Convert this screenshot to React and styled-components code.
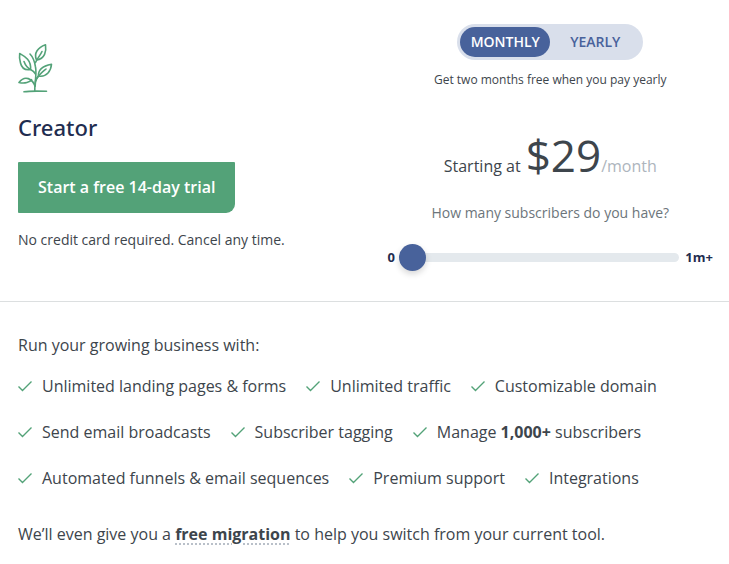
import React, { Component } from 'react';
import styled, { createGlobalStyle } from 'styled-components';

const GlobalStyle = createGlobalStyle`
  * {
    box-sizing: border-box;
  }

  body {
    margin: 0;
    background: #fff;
    color: #3d454c;
    font-family: "Open Sans", "Noto Sans", sans-serif;
    font-size: 16px;
    line-height: 24px;
  }
`;

const TopWrapper = styled.section`
  display: grid;
  grid-template-columns: 1fr 1fr;
  column-gap: 44px;
  padding: 24px 16px 30px 18px;
  border-bottom: 1px solid #dcdfe0;
`;

const PlanWrapper = styled.div`
  display: flex;
  flex-direction: column;
  align-items: flex-start;
  padding-top: 19px;
`;

const PlanTitle = styled.h2`
  margin: 17px 0 19px;
  color: #1f2d50;
  font-family: "Noto Sans", sans-serif;
  font-size: 22px;
  font-weight: 500;
  line-height: 32px;
`;

const TrialButton = styled.button`
  height: 51px;
  padding: 0 20px 2px;
  border: 0;
  border-radius: 1px 1px 9px 1px;
  background: #53a278;
  color: #fff;
  font-family: inherit;
  font-size: 16px;
  font-weight: 600;
  cursor: pointer;
`;

const SmallPrint = styled.p`
  margin: 15px 0 0;
  font-size: 14px;
`;

const PriceWrapper = styled.div`
  display: flex;
  flex-direction: column;
  align-items: center;
`;

const ToggleWrapper = styled.div`
  display: flex;
  height: 36px;
  padding: 3px;
  border-radius: 18px;
  background: #d9dfeb;
`;

const ToggleButton = styled.button`
  width: 90px;
  padding: 0 0 2px;
  border: 0;
  border-radius: 15px;
  background: ${props => props.$active ? '#48629b' : 'transparent'};
  color: ${props => props.$active ? '#fff' : '#48629b'};
  font-family: inherit;
  font-size: 14px;
  font-weight: 600;
  cursor: pointer;
`;

const ToggleNote = styled.p`
  margin: 8px 0 0;
  font-size: 12px;
`;

const Price = styled.p`
  margin: 33px 0 0;
  line-height: 60px;
`;

const Amount = styled.span`
  margin-left: 5px;
  font-size: 44px;
`;

const Period = styled.span`
  color: #adb5bd;
`;

const SliderLabel = styled.label`
  margin-top: 5px;
  color: #6c757b;
  font-size: 14px;
`;

const SliderWrapper = styled.div`
  display: flex;
  align-items: center;
  align-self: stretch;
  margin-top: 19px;
`;

const SliderEnd = styled.span`
  padding-bottom: 2px;
  color: #1f2d50;
  font-size: 13px;
  font-weight: 700;
`;

const Slider = styled.input`
  flex: 1;
  min-width: 0;
  height: 27px;
  margin: 0 6px 0 4px;
  appearance: none;
  background: transparent;
  cursor: pointer;

  &::-webkit-slider-runnable-track {
    height: 9px;
    border-radius: 5px;
    background: #e4e9ed;
  }

  &::-webkit-slider-thumb {
    appearance: none;
    width: 27px;
    height: 27px;
    margin-top: -9px;
    border-radius: 50%;
    background: #48629b;
    box-shadow: 0 3px 6px rgba(0, 0, 0, 0.16);
  }
`;

const FeaturesWrapper = styled.section`
  padding: 31px 18px 18px;
`;

const Paragraph = styled.p`
  margin: 0;
`;

const FeatureList = styled.ul`
  display: flex;
  flex-wrap: wrap;
  gap: 22px 20px;
  margin: 17px 0 32px;
  padding: 0;
  list-style: none;
`;

const Feature = styled.li`
  display: flex;
  align-items: center;
  gap: 10px;
`;

const MigrationLink = styled.a`
  color: inherit;
  font-weight: 700;
  text-decoration: underline dotted #b9c0c9 2px;
  text-underline-offset: 3px;
`;

const features = [
  'Unlimited landing pages & forms',
  'Unlimited traffic',
  'Customizable domain',
  'Send email broadcasts',
  'Subscriber tagging',
  <>Manage <b>1,000+</b> subscribers</>,
  'Automated funnels & email sequences',
  'Premium support',
  'Integrations'
];

const PlantIcon = () => (
  <svg width="35" height="51" viewBox="0 0 35 51" fill="none" stroke="#53a278"
    strokeWidth="1.6" strokeLinecap="round" strokeLinejoin="round" aria-hidden="true">
    <path d="M6 48.8C12 47.8 20 48 28.500 48.300" />
    <path d="M16.800 48C16.500 40 19 31 17.500 24C16.700 19 14.500 13.500 12 11" />
    <path d="M12.500 26.500C6.500 27.500 3.500 24.500 2.500 20C1.500 16.500 1.300 13 1.700 10.500C7 13.500 13.500 17 12.500 26.500" />
    <path d="M6 18.500C7.500 22.500 9.500 25 12.500 26.500C14.500 27.500 16 28.500 17.500 31" />
    <path d="M18.500 17C15.500 10 20 4.500 27.500 1.800C28.500 8 27 16 18.500 17" />
    <path d="M24 8.500C22.500 12 19.500 15 17.500 19.500" />
    <path d="M20.500 33C20 27 25 23 33.500 21.300C33 27.500 29 34.500 20.500 33" />
    <path d="M28 26C25 28.500 20 32 17.500 38" />
    <path d="M17.200 43C17 36 19 35 20.500 33" />
    <path d="M17 43C14.500 36 7 31.500 1 39.500C7 41 12 39 13.500 36.700" />
  </svg>
);

const CheckIcon = () => (
  <svg width="14" height="12" viewBox="0 0 14 12" fill="none" stroke="#53a278"
    strokeWidth="1.4" aria-hidden="true">
    <path d="M0.500 6.500L4.500 10.500L13.500 1.500" />
  </svg>
);

class App extends Component {
  constructor(props) {
    super(props);
    this.state = {
      billing: 'monthly',
      subscribers: 0
    };
  }

  onBillingClicked = (billing) => {
    this.setState({billing});
  }

  onSliderChanged = (e) => {
    this.setState({subscribers: Number(e.target.value)});
  }

  render() {
    const { billing, subscribers } = this.state;

    return (
      <main>
        <GlobalStyle />
        <TopWrapper>
          <PlanWrapper>
            <PlantIcon />
            <PlanTitle>Creator</PlanTitle>
            <TrialButton type="button">Start a free 14-day trial</TrialButton>
            <SmallPrint>No credit card required. Cancel any time.</SmallPrint>
          </PlanWrapper>
          <PriceWrapper>
            <ToggleWrapper>
              <ToggleButton
                type="button"
                $active={billing === 'monthly'}
                aria-pressed={billing === 'monthly'}
                onClick={() => this.onBillingClicked('monthly')}
              >
                MONTHLY
              </ToggleButton>
              <ToggleButton
                type="button"
                $active={billing === 'yearly'}
                aria-pressed={billing === 'yearly'}
                onClick={() => this.onBillingClicked('yearly')}
              >
                YEARLY
              </ToggleButton>
            </ToggleWrapper>
            <ToggleNote>Get two months free when you pay yearly</ToggleNote>
            <Price>
              Starting at<Amount>$29</Amount><Period>/month</Period>
            </Price>
            <SliderLabel htmlFor="subscribers">How many subscribers do you have?</SliderLabel>
            <SliderWrapper>
              <SliderEnd>0</SliderEnd>
              <Slider
                id="subscribers"
                type="range"
                min="0"
                max="1000000"
                step="1000"
                value={subscribers}
                onChange={this.onSliderChanged}
              />
              <SliderEnd>1m+</SliderEnd>
            </SliderWrapper>
          </PriceWrapper>
        </TopWrapper>
        <FeaturesWrapper>
          <Paragraph>Run your growing business with:</Paragraph>
          <FeatureList>
            {features.map((feature, index) => (
              <Feature key={index}>
                <CheckIcon />
                <span>{feature}</span>
              </Feature>
            ))}
          </FeatureList>
          <Paragraph>
            We’ll even give you a <MigrationLink href="#migration">free migration</MigrationLink> to help you switch from your current tool.
          </Paragraph>
        </FeaturesWrapper>
      </main>
    );
  }
}

export default App;
